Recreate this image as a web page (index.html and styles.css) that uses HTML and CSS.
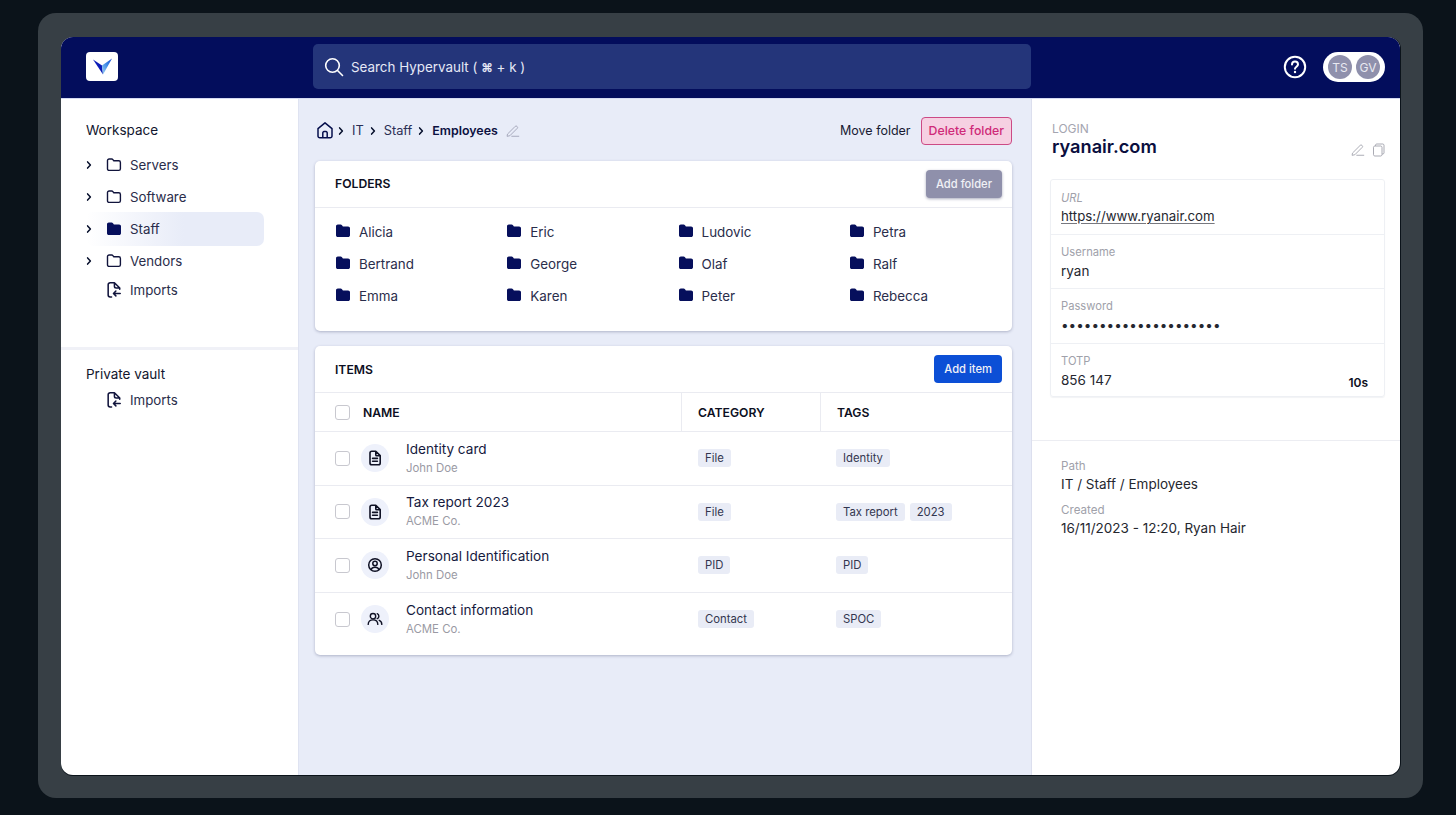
FILE: index.html
```html
<!DOCTYPE html>
<html lang="en">
<head>
<meta charset="utf-8">
<title>Hypervault</title>
<link rel="stylesheet" href="styles.css">
</head>
<body>
<svg class="defs" width="0" height="0" aria-hidden="true">
  <defs>
    <linearGradient id="lg" x1="1" y1="0" x2="0" y2="1"><stop offset="0" stop-color="#1546d0"/><stop offset=".45" stop-color="#3f8ae6"/><stop offset="1" stop-color="#a3d6f4"/></linearGradient>
    <symbol id="i-folder" viewBox="0 0 16 16"><path d="M1.5 3.6c0-.9.7-1.6 1.6-1.6h2.6c.5 0 .9.2 1.2.6l.9 1.2h5c.9 0 1.6.7 1.6 1.6v6.4c0 .9-.7 1.6-1.6 1.6H3.1c-.9 0-1.6-.7-1.6-1.6z" fill="none" stroke="currentColor" stroke-width="1.4" stroke-linejoin="round"/></symbol>
    <symbol id="i-folder-fill" viewBox="0 0 16 16"><path d="M1 3.400C1 2.300 1.800 1.600 2.800 1.600h2.800c.6 0 1 .2 1.400.7l.9 1.200h5.200c1 0 1.900.8 1.900 1.800v6.900c0 1-.9 1.800-1.900 1.800H2.800c-1 0-1.800-.8-1.800-1.800z" fill="currentColor"/></symbol>
    <symbol id="i-chev" viewBox="0 0 8 10"><path d="M2.600 1.900 5.400 5 2.600 8.100" fill="none" stroke="currentColor" stroke-width="1.500" stroke-linecap="round" stroke-linejoin="round"/></symbol>
    <symbol id="i-import" viewBox="1.800 .4 14.500 16.600"><path d="M6.500 16H5a2 2 0 0 1-2-2V3.200a2 2 0 0 1 2-2h4.500L15 6.600V8M9.500 1.300v3.500a1.800 1.800 0 0 0 1.800 1.800H15" fill="none" stroke="currentColor" stroke-width="1.600" stroke-linecap="round" stroke-linejoin="round"/><path d="M15.500 12.300H8.600m2.400-2.500-2.500 2.500 2.500 2.500" fill="none" stroke="currentColor" stroke-width="1.600" stroke-linecap="round" stroke-linejoin="round"/></symbol>
    <symbol id="i-pen" viewBox="0 0 16 16"><path d="M2 11.200 10.500 2.700a1.400 1.400 0 0 1 2 0l.3.3a1.400 1.400 0 0 1 0 2L4.400 13.400 1.700 14zM6.600 14h8" fill="none" stroke="currentColor" stroke-width="1" stroke-linecap="round" stroke-linejoin="round"/></symbol>
    <symbol id="i-doc" viewBox="-.5 0 15 16"><path d="M2 3a1.800 1.800 0 0 1 1.800-1.800h4L12.200 5.600V13a1.800 1.800 0 0 1-1.800 1.800H3.800A1.800 1.800 0 0 1 2 13zM7.800 1.400V5a.8.8 0 0 0 .8.8h3.400M4.600 8.400h4.800M4.600 11.200h4.800" fill="none" stroke="currentColor" stroke-width="1.600" stroke-linecap="round" stroke-linejoin="round"/></symbol>
    <symbol id="i-user" viewBox="0 0 16 16"><circle cx="8" cy="8" r="6.300" fill="none" stroke="currentColor" stroke-width="1.500"/><circle cx="8" cy="6.500" r="2.200" fill="none" stroke="currentColor" stroke-width="1.500"/><path d="M4 12.800c.6-1.800 2.200-2.600 4-2.600s3.400.8 4 2.600" fill="none" stroke="currentColor" stroke-width="1.500"/></symbol>
    <symbol id="i-users" viewBox="0 0 16 16"><circle cx="6" cy="5.200" r="2.700" fill="none" stroke="currentColor" stroke-width="1.400"/><path d="M1.200 13.400c0-2.800 2-4.500 4.800-4.500s4.800 1.700 4.800 4.500M10.200 2.700a2.700 2.700 0 0 1 0 5M12.200 9.300c1.600.6 2.600 2 2.600 4.100" fill="none" stroke="currentColor" stroke-width="1.400" stroke-linecap="round"/></symbol>
  </defs>
</svg>
<div class="frame">
  <div class="window">
    <header class="topbar">
      <div class="brand">
        <div class="logo">
          <svg width="20" height="20" viewBox="0 0 20 20"><path d="M1 2.500 10 8.500 11 17.500z" fill="#0b1cb8"/><path d="M20 1.500 11 17.500 10 8.500z" fill="url(#lg)"/></svg>
        </div>
      </div>
      <div class="search">
        <svg width="22" height="22" viewBox="0 0 22 22"><circle cx="9.500" cy="9.500" r="6.800" fill="none" stroke="#fff" stroke-width="1.600"/><path d="m14.500 14.500 5 5" stroke="#fff" stroke-width="1.600" stroke-linecap="round"/></svg>
        <span>Search Hypervault ( <b class="cmd">⌘</b> + k )</span>
      </div>
      <div class="top-right">
        <svg width="24" height="24" viewBox="0 0 24 24"><circle cx="12" cy="12" r="10.200" fill="none" stroke="#fff" stroke-width="2"/><path d="M9 9.500a3 3 0 0 1 6 .1c0 2-3 2.300-3 4.200" fill="none" stroke="#fff" stroke-width="2" stroke-linecap="round"/><circle cx="12" cy="17" r="1.200" fill="#fff"/></svg>
        <div class="avatars"><span class="avatar">TS</span><span class="avatar">GV</span></div>
      </div>
    </header>
    <div class="panes">
      <aside class="sidebar">
        <section class="side-top">
          <h2 class="side-title">Workspace</h2>
          <ul class="tree">
            <li class="tree-row"><svg class="chev"><use href="#i-chev"/></svg><svg class="t-ico"><use href="#i-folder"/></svg><span>Servers</span></li>
            <li class="tree-row"><svg class="chev"><use href="#i-chev"/></svg><svg class="t-ico"><use href="#i-folder"/></svg><span>Software</span></li>
            <li class="tree-row active"><svg class="chev"><use href="#i-chev"/></svg><svg class="t-ico navy"><use href="#i-folder-fill"/></svg><span>Staff</span></li>
            <li class="tree-row"><svg class="chev"><use href="#i-chev"/></svg><svg class="t-ico"><use href="#i-folder"/></svg><span>Vendors</span></li>
            <li class="tree-row short"><span class="chev"></span><svg class="t-ico"><use href="#i-import"/></svg><span>Imports</span></li>
          </ul>
        </section>
        <section class="side-bottom">
          <h2 class="side-title">Private vault</h2>
          <ul class="tree">
            <li class="tree-row short"><span class="chev"></span><svg class="t-ico"><use href="#i-import"/></svg><span>Imports</span></li>
          </ul>
        </section>
      </aside>
      <main class="middle">
        <div class="crumbbar">
          <nav class="crumbs">
            <svg class="home" width="18" height="18" viewBox="0 0 18 18"><path d="M2 7.600 9 1.800l7 5.800V15a1.800 1.800 0 0 1-1.800 1.800H3.800A1.800 1.800 0 0 1 2 15zM6.800 16.800v-5a1.200 1.200 0 0 1 1.200-1.200h2a1.200 1.200 0 0 1 1.200 1.200v5" fill="none" stroke="#060f4c" stroke-width="1.500" stroke-linejoin="round"/></svg>
            <svg class="chev"><use href="#i-chev"/></svg><span>IT</span>
            <svg class="chev"><use href="#i-chev"/></svg><span>Staff</span>
            <svg class="chev"><use href="#i-chev"/></svg><strong>Employees</strong>
            <svg class="pen"><use href="#i-pen"/></svg>
          </nav>
          <div class="crumb-actions">
            <span class="move">Move folder</span>
            <span class="delete">Delete folder</span>
          </div>
        </div>
        <section class="card folders-card">
          <div class="card-head"><h3>FOLDERS</h3><span class="btn btn-grey">Add folder</span></div>
          <div class="folder-grid">
            <div class="folder"><svg><use href="#i-folder-fill"/></svg>Alicia</div>
            <div class="folder"><svg><use href="#i-folder-fill"/></svg>Eric</div>
            <div class="folder"><svg><use href="#i-folder-fill"/></svg>Ludovic</div>
            <div class="folder"><svg><use href="#i-folder-fill"/></svg>Petra</div>
            <div class="folder"><svg><use href="#i-folder-fill"/></svg>Bertrand</div>
            <div class="folder"><svg><use href="#i-folder-fill"/></svg>George</div>
            <div class="folder"><svg><use href="#i-folder-fill"/></svg>Olaf</div>
            <div class="folder"><svg><use href="#i-folder-fill"/></svg>Ralf</div>
            <div class="folder"><svg><use href="#i-folder-fill"/></svg>Emma</div>
            <div class="folder"><svg><use href="#i-folder-fill"/></svg>Karen</div>
            <div class="folder"><svg><use href="#i-folder-fill"/></svg>Peter</div>
            <div class="folder"><svg><use href="#i-folder-fill"/></svg>Rebecca</div>
          </div>
        </section>
        <section class="card items-card">
          <div class="card-head items-head"><h3>ITEMS</h3><span class="btn btn-blue">Add item</span></div>
          <div class="t-row t-header">
            <div class="c-name"><span class="check"></span><span>NAME</span></div>
            <div class="c-cat">CATEGORY</div>
            <div class="c-tags">TAGS</div>
          </div>
          <div class="t-row">
            <div class="c-name"><span class="check"></span><span class="round"><svg class="doc"><use href="#i-doc"/></svg></span><div class="item-text"><div class="item-title">Identity card</div><div class="item-sub">John Doe</div></div></div>
            <div class="c-cat"><span class="tag">File</span></div>
            <div class="c-tags"><span class="tag">Identity</span></div>
          </div>
          <div class="t-row">
            <div class="c-name"><span class="check"></span><span class="round"><svg class="doc"><use href="#i-doc"/></svg></span><div class="item-text"><div class="item-title">Tax report 2023</div><div class="item-sub">ACME Co.</div></div></div>
            <div class="c-cat"><span class="tag">File</span></div>
            <div class="c-tags"><span class="tag">Tax report</span><span class="tag">2023</span></div>
          </div>
          <div class="t-row">
            <div class="c-name"><span class="check"></span><span class="round"><svg class="doc"><use href="#i-user"/></svg></span><div class="item-text"><div class="item-title">Personal Identification</div><div class="item-sub">John Doe</div></div></div>
            <div class="c-cat"><span class="tag">PID</span></div>
            <div class="c-tags"><span class="tag">PID</span></div>
          </div>
          <div class="t-row last">
            <div class="c-name"><span class="check"></span><span class="round"><svg class="doc"><use href="#i-users"/></svg></span><div class="item-text"><div class="item-title">Contact information</div><div class="item-sub">ACME Co.</div></div></div>
            <div class="c-cat"><span class="tag">Contact</span></div>
            <div class="c-tags"><span class="tag">SPOC</span></div>
          </div>
        </section>
      </main>
      <aside class="detail">
        <div class="detail-top">
          <div class="detail-head">
            <div>
              <div class="kind">LOGIN</div>
              <h1 class="detail-title">ryanair.com</h1>
            </div>
            <div class="detail-tools">
              <svg class="tool"><use href="#i-pen"/></svg>
              <svg class="tool" viewBox="0 0 14 14"><path d="M3.500 3V2.200c0-.7.500-1.200 1.200-1.200h6.100c.7 0 1.200.5 1.200 1.200v7.600c0 .7-.5 1.200-1.200 1.200H10M2.800 3h5.900c.7 0 1.300.6 1.300 1.300v7.400c0 .7-.6 1.300-1.300 1.300H2.800c-.7 0-1.300-.6-1.300-1.300V4.300C1.500 3.600 2.100 3 2.800 3z" fill="none" stroke="currentColor" stroke-width=".9"/></svg>
            </div>
          </div>
          <div class="fields">
            <div class="field first"><div class="f-label url-label">URL</div><div class="f-value"><span class="link">https://www.ryanair.com</span></div></div>
            <div class="field"><div class="f-label">Username</div><div class="f-value">ryan</div></div>
            <div class="field"><div class="f-label">Password</div><div class="f-value dots">•••••••••••••••••••••</div></div>
            <div class="field"><div class="f-label">TOTP</div><div class="f-value totp"><span>856 147</span><b>10s</b></div></div>
          </div>
        </div>
        <div class="meta">
          <div class="f-label">Path</div>
          <div class="f-value">IT / Staff / Employees</div>
          <div class="f-label created">Created</div>
          <div class="f-value">16/11/2023 - 12:20, Ryan Hair</div>
        </div>
      </aside>
    </div>
  </div>
</div>
</body>
</html>
```
FILE: styles.css
```css
* { box-sizing: border-box; }
html, body { height: 100%; }
body {
  margin: 0;
  background: #0b131a;
  padding: 13px 33px 17px 38px;
  font-family: Inter, "Liberation Sans", sans-serif;
  font-size: 13.5px;
  color: #1c2040;
  overflow: hidden;
}
.defs { position: absolute; }
h1, h2, h3, ul { margin: 0; padding: 0; }
ul { list-style: none; }
svg { display: block; flex: none; }

.frame {
  height: 785px;
  padding: 24px 23px 23px;
  background: #373f45;
  border-radius: 18px;
}
.window {
  height: 738px;
  display: flex;
  flex-direction: column;
  background: #fff;
  border-radius: 12px;
  overflow: hidden;
  box-shadow: 0 1px 0 #0b131a, 1px 0 0 #0b131a;
}

.topbar {
  height: 61px;
  flex: none;
  position: relative;
  display: flex;
  align-items: center;
  background: #030d5c;
  box-shadow: 0 1px 0 #d4d9f2;
}
.brand { width: 252px; flex: none; padding-left: 25px; }
.logo {
  width: 32px;
  height: 29px;
  margin-bottom: 2px;
  display: flex;
  align-items: center;
  justify-content: center;
  background: #fff;
  border-radius: 4px;
}
.search {
  width: 718px;
  height: 45px;
  margin-bottom: 2px;
  display: flex;
  align-items: center;
  gap: 6px;
  padding-left: 10px;
  background: #24357a;
  border-radius: 5px;
  color: #e6e9f6;
  font-size: 13.400px;
}
.cmd { font-weight: 700; font-size: 12px; }
.top-right {
  flex: 1;
  display: flex;
  align-items: center;
  justify-content: flex-end;
  gap: 16px;
  padding-right: 15px;
  margin-bottom: 1px;
}
.avatars {
  width: 62px;
  height: 30px;
  display: flex;
  align-items: center;
  justify-content: center;
  gap: 4px;
  background: #fff;
  border-radius: 15px;
}
.avatar {
  width: 24px;
  height: 24px;
  display: flex;
  align-items: center;
  justify-content: center;
  border-radius: 50%;
  background: #8f90ac;
  color: #e9e9f1;
  font-size: 12px;
}

.panes { flex: 1; display: flex; min-height: 0; }
.sidebar {
  width: 238px;
  flex: none;
  border-right: 1px solid #dfe3f1;
}
.side-top { height: 252px; padding: 24px 0 0 25px; border-bottom: 3px solid #f0f1f7; }
.side-bottom { padding: 16px 0 0 25px; }
.side-title { font-size: 13.500px; font-weight: 400; line-height: 17px; color: #12162e; }
.tree { margin-top: 9px; }
.side-bottom .tree { margin-top: 4px; }
.tree-row {
  width: 178px;
  height: 34px;
  margin-bottom: -2px;
  display: flex;
  align-items: center;
  border-radius: 7px;
  font-size: 13.300px;
  color: #2a2d4b;
}
.tree-row.short { height: 26px; margin-top: 1px; }
.tree-row.active { background: linear-gradient(90deg, #fff 0%, #e8ecf8 55%, #e8ecf8 100%); }
.chev { width: 8px; height: 10px; margin-left: -1px; margin-right: 13px; color: #060f2c; }
span.chev { display: block; }
.t-ico { width: 16px; height: 16px; margin-right: 8px; color: #11143c; }
.t-ico.navy { color: #060f5c; }

.middle {
  width: 733px;
  flex: none;
  padding: 0 19px 0 16px;
  background: #e8ecf8;
  border-right: 1px solid #dcdfee;
}
.crumbbar {
  height: 63px;
  display: flex;
  align-items: center;
  justify-content: space-between;
  padding-top: 2px;
}
.crumbs { display: flex; align-items: center; margin-left: 1px; font-size: 12.800px; color: #2b2f55; }
.crumbs .home { margin-right: 3px; margin-top: -2px; }
.crumbs .chev { margin-right: 7px; margin-left: 0; width: 8px; }
.crumbs span { margin-right: 5px; }
.crumbs strong { font-weight: 600; font-size: 12.400px; color: #0b1040; }
.crumbs .pen { width: 14px; height: 14px; margin-left: 8px; color: #9ea0b5; }
.crumb-actions { display: flex; align-items: center; gap: 10px; }
.move { font-size: 12.500px; color: #181b33; }
.delete {
  height: 28px;
  padding: 0 7px;
  display: flex;
  align-items: center;
  font-size: 12.300px;
  font-weight: 500;
  color: #cf2a78;
  background: #f6d0e2;
  border: 1px solid #cc4a85;
  border-radius: 4px;
}

.card {
  background: #fff;
  border-radius: 5px;
  box-shadow: 0 1px 3px rgba(40, 46, 90, .3);
}
.folders-card { height: 170px; }
.card-head {
  height: 47px;
  display: flex;
  align-items: center;
  justify-content: space-between;
  padding: 0 10px 0 20px;
  border-bottom: 1px solid #eaebf1;
}
.card-head h3 { font-size: 12.200px; font-weight: 600; margin-top: -2px; color: #0d0f22; }
.items-head h3 { margin-top: 0; }
.btn {
  height: 28px;
  display: flex;
  align-items: center;
  padding: 0 10px;
  border-radius: 4px;
  font-size: 11.200px;
  font-weight: 500;
  color: #f0f1f6;
}
.btn-grey { background: #8f90ab; box-shadow: 0 1px 3px rgba(40,46,90,.4); }
.btn-blue { background: #0c4fd6; }
.folder-grid {
  display: grid;
  grid-template-columns: repeat(4, 171.300px);
  grid-auto-rows: 32px;
  padding: 8px 0 0 20px;
}
.folder { display: flex; align-items: center; gap: 8px; font-size: 13.400px; color: #2a2d4b; }
.folder svg { width: 16px; height: 16px; color: #060f5c; margin-top: -2px; }

.items-card { height: 309px; margin-top: 15px; }
.items-head { height: 47px; }
.t-row {
  display: grid;
  grid-template-columns: 366px 139px 1fr;
  height: 53.500px;
  border-bottom: 1px solid #eaebf1;
}
.t-row.last { border-bottom: 0; }
.t-row.t-header { height: 39px; font-size: 12.200px; font-weight: 600; color: #0d0f22; }
.t-header .c-cat, .t-header .c-tags { border-left: 1px solid #eaebf1; padding-left: 16px; }
.t-header .c-name { gap: 13px; }
.c-name { display: flex; align-items: center; padding-left: 20px; }
.c-cat { display: flex; align-items: center; gap: 5px; padding-left: 17px; }
.c-tags { display: flex; align-items: center; gap: 5px; padding-left: 16px; }
.check {
  width: 15px;
  height: 15px;
  flex: none;
  border: 1px solid #c8c8cf;
  border-radius: 3px;
  background: #fff;
}
.round {
  width: 28px;
  height: 28px;
  flex: none;
  margin-left: 11px;
  display: flex;
  align-items: center;
  justify-content: center;
  border-radius: 50%;
  background: #eef1fb;
}
.doc { width: 16px; height: 16px; color: #101225; }
.item-text { margin-left: 17px; margin-top: -1px; }
.item-title { font-size: 13.600px; line-height: 18px; color: #161a3e; }
.item-sub { font-size: 11.400px; line-height: 15px; margin-top: 3px; color: #9a9aa4; }
.tag {
  height: 18px;
  display: flex;
  align-items: center;
  padding: 0 7px;
  background: #e9ecf6;
  border-radius: 3px;
  font-size: 11.300px;
  color: #33364f;
}

.detail { flex: 1; display: flex; flex-direction: column; }
.detail-top { height: 343px; padding: 24px 15px 0 18px; border-bottom: 1px solid #ecedf2; }
.detail-head { display: flex; justify-content: space-between; align-items: flex-end; padding-left: 2px; }
.kind { font-size: 12px; line-height: 14px; color: #a4a5b0; }
.detail-title { font-size: 18.200px; line-height: 21px; font-weight: 600; color: #0a0e3e; }
.detail-tools { display: flex; gap: 7px; margin-right: -1px; }
.tool { width: 14px; height: 14px; color: #a0a1ac; }
.fields {
  margin-top: 22px;
  border: 1px solid #eef0f4;
  border-radius: 3px;
  box-shadow: 0 1px 1px rgba(40,46,90,.06);
}
.field { height: 54.700px; padding: 10px 10px 0; border-bottom: 1px solid #eef0f4; }
.field.first { padding-top: 11px; }
.field.first .f-value { margin-top: 2px; }
.field:last-child { height: 52px; border-bottom: 0; }
.f-label { font-size: 11.200px; line-height: 14px; color: #a0a1aa; }
.meta .f-label { font-size: 11.600px; }
.url-label { font-style: italic; }
.f-value { font-size: 13.500px; line-height: 18px; margin-top: 3px; color: #25272f; }
.link { font-size: 13.250px; text-decoration: underline; text-decoration-color: #77787f; text-underline-offset: 2px; }
.dots { letter-spacing: 0; color: #25272f; }
.totp { display: flex; justify-content: space-between; padding-right: 6px; }
.totp b { font-size: 12px; font-weight: 600; margin-top: 3px; color: #0d0f22; }
.meta { padding: 18px 0 0 29px; }
.meta .f-value { margin-top: 2px; }
.created { margin-top: 10px; }
```
